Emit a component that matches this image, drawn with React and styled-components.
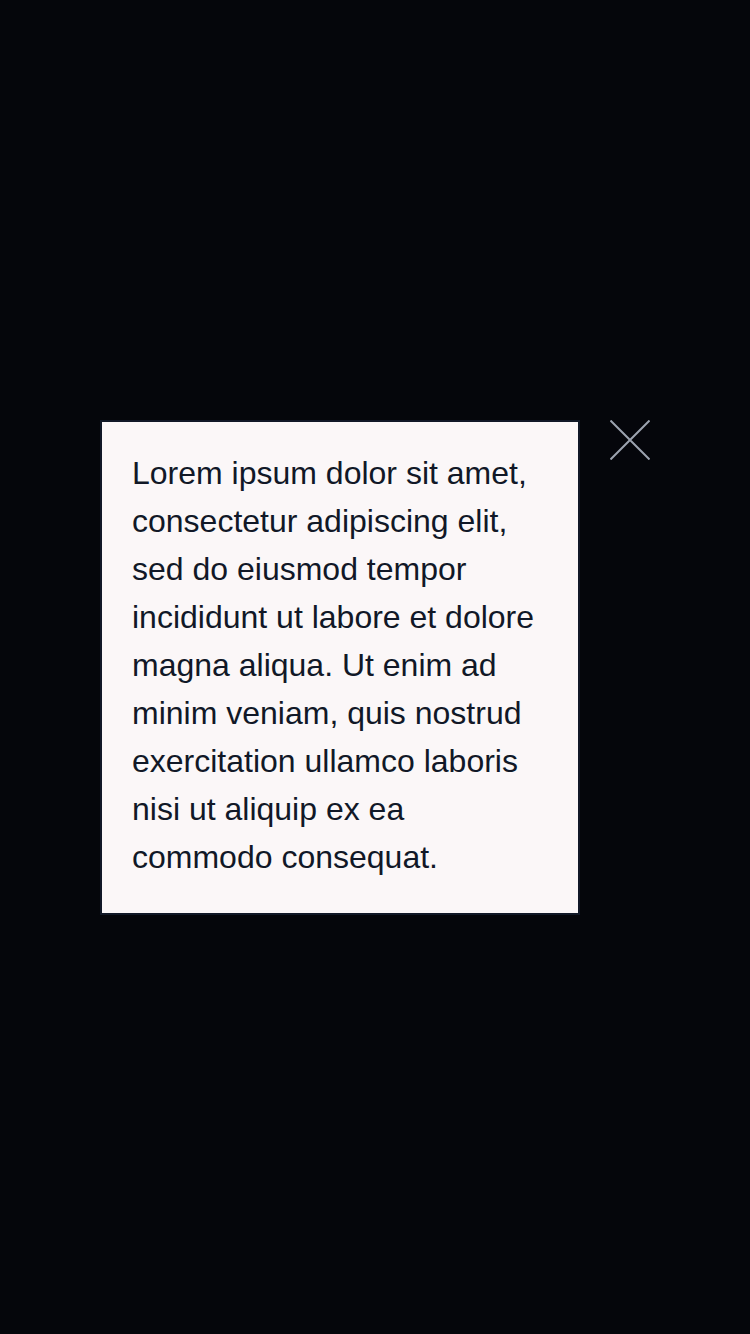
import React from "react";
import styled, { createGlobalStyle } from "styled-components";

const Global = createGlobalStyle`
  html, body { margin: 0; padding: 0; background: #05060b; }
  #root { min-height: 100vh; }
`;

const Overlay = styled.div`
  min-height: 100vh;
  display: flex;
  align-items: center;
  justify-content: center;
  background: #05060b;
`;

const Row = styled.div`
  display: flex;
  align-items: flex-start;
  gap: 30px;
`;

const Dialog = styled.div`
  box-sizing: border-box;
  width: 480px;
  padding: 27px 30px 32px;
  background: #fbf7f8;
  border: 2px solid #111827;
`;

const Text = styled.p`
  margin: 0;
  font-family: "Liberation Sans", Arial, sans-serif;
  font-size: 32px;
  line-height: 48px;
  color: #111827;
`;

const Close = styled.button`
  width: 40px;
  height: 40px;
  padding: 0;
  border: 0;
  background: transparent;
  display: block;
  cursor: pointer;
`;

export default function App() {
  return (
    <>
      <Global />
      <Overlay>
        <Row>
          <Dialog>
            <Text>
              Lorem ipsum dolor sit amet, consectetur adipiscing elit, sed do eiusmod tempor incididunt ut labore et dolore magna aliqua. Ut enim ad minim veniam, quis nostrud exercitation ullamco laboris nisi ut aliquip ex ea commodo consequat.
            </Text>
          </Dialog>
          <Close aria-label="Close">
            <svg width="40" height="40" viewBox="0 0 40 40">
              <path d="M0.5 0.5L39.5 39.5M39.5 0.5L0.5 39.5" stroke="#9ca3af" strokeWidth="2" fill="none" />
            </svg>
          </Close>
        </Row>
      </Overlay>
    </>
  );
}
